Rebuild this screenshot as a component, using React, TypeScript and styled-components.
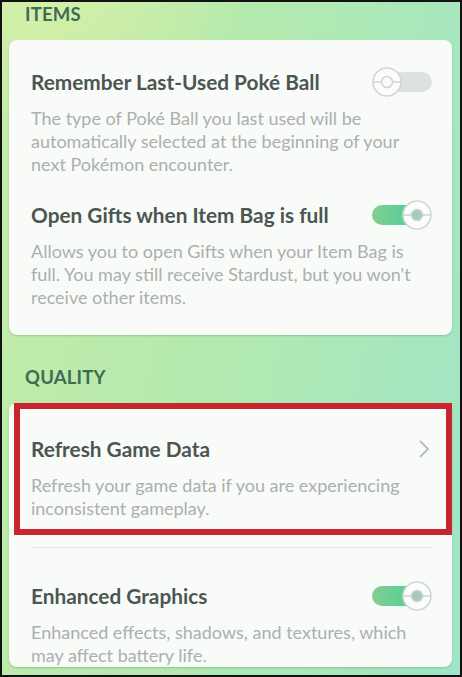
import React from "react"
import styled, { createGlobalStyle } from "styled-components"

const GlobalStyle = createGlobalStyle`
	html, body {
		margin: 0;
		padding: 0;
		height: 100%;
	}
	body {
		font-family: Lato, "Noto Sans", "Liberation Sans", sans-serif;
		-webkit-font-smoothing: antialiased;
	}
	#root {
		height: 100%;
	}
`

interface SettingProps {
	title: string
	description: string
	control?: React.ReactNode
}

function Setting(props: SettingProps) {
	return (
		<Row>
			<TitleLine>
				<Title>{props.title}</Title>
				<Control>{props.control}</Control>
			</TitleLine>
			<Description>{props.description}</Description>
		</Row>
	)
}

function PokeBall(props: { on?: boolean }) {
	return (
		<svg width="30" height="30" viewBox="0 0 30 30">
			<circle cx="15" cy="15" r="14" fill="#fbfcfb" stroke="#d2d7d5" strokeWidth="1.6" />
			<line x1="1" y1="15" x2="29" y2="15" stroke="#d2d7d5" strokeWidth="1.6" />
			<circle
				cx="15"
				cy="15"
				r="5.5"
				fill={props.on ? "#a9c8bc" : "#fbfcfb"}
				stroke={props.on ? "#c5d8d0" : "#d2d7d5"}
				strokeWidth="1.6"
			/>
		</svg>
	)
}

function Toggle(props: { on?: boolean }) {
	return (
		<Switch>
			<Track $on={props.on} />
			<Knob $on={props.on}>
				<PokeBall on={props.on} />
			</Knob>
		</Switch>
	)
}

function Chevron() {
	return (
		<svg width="12" height="20" viewBox="0 0 12 20">
			<path d="M2.5 2.5 L10 10 L2.5 17.5" fill="none" stroke="#b9bebc" strokeWidth="1.8" strokeLinecap="round" strokeLinejoin="round" />
		</svg>
	)
}

export default function App() {
	return (
		<>
			<GlobalStyle />
			<Screen>
				<Section>
					<Heading>ITEMS</Heading>
					<Card $padded>
						<Setting
							title="Remember Last-Used Poké Ball"
							description="The type of Poké Ball you last used will be automatically selected at the beginning of your next Pokémon encounter."
							control={<Toggle />}
						/>
						<Setting
							title="Open Gifts when Item Bag is full"
							description="Allows you to open Gifts when your Item Bag is full. You may still receive Stardust, but you won't receive other items."
							control={<Toggle on />}
						/>
					</Card>
				</Section>
				<Section>
					<Heading>QUALITY</Heading>
					<Card>
						<Highlight>
							<Setting
								title="Refresh Game Data"
								description="Refresh your game data if you are experiencing inconsistent gameplay."
								control={
									<ChevronSlot>
										<Chevron />
									</ChevronSlot>
								}
							/>
						</Highlight>
						<Divider />
						<Plain>
							<Setting
								title="Enhanced Graphics"
								description="Enhanced effects, shadows, and textures, which may affect battery life."
								control={<Toggle on />}
							/>
						</Plain>
					</Card>
				</Section>
			</Screen>
		</>
	)
}

const Screen = styled.div`
	box-sizing: border-box;
	height: 100vh;
	overflow: hidden;
	border: 2px solid #121212;
	padding: 0 8px 0 7px;
	display: flex;
	flex-direction: column;
	gap: 30px;
	background:
		radial-gradient(ellipse 60% 30% at 10% 0%, rgba(214, 240, 168, 0.9), rgba(214, 240, 168, 0) 70%),
		linear-gradient(100deg, #c4eca8 0%, #b4eaae 45%, #a0e5c6 100%);
`

const Section = styled.section`
	display: flex;
	flex-direction: column;
`

const Heading = styled.h2`
	margin: 0 0 14px;
	padding-left: 16px;
	font-size: 18.5px;
	line-height: 24px;
	font-weight: 700;
	letter-spacing: 0.2px;
	color: #3f6c56;
`

const Card = styled.div<{ $padded?: boolean }>`
	background: #f9fbf9;
	border-radius: 8px;
	box-shadow: 0 1px 2px rgba(40, 90, 60, 0.25);
	display: flex;
	flex-direction: column;
	gap: 27px;
	${props => (props.$padded ? "padding: 30px 20px 26px 22px;" : "gap: 0;")}
`

const Highlight = styled.div`
	margin-left: 5px;
	border: 6px solid #c8262e;
	padding: 28px 14px 9px 11px;
`

const Plain = styled.div`
	padding: 36px 20px 0 22px;
`

const Divider = styled.div`
	height: 1px;
	margin: 12px 20px 0 22px;
	background: #e2e6e4;
`

const Row = styled.div`
	display: flex;
	flex-direction: column;
	gap: 13px;
`

const TitleLine = styled.div`
	display: flex;
	align-items: center;
	justify-content: space-between;
	height: 24px;
`

const Title = styled.div`
	font-size: 20.8px;
	line-height: 24px;
	font-weight: 700;
	color: #4b5652;
	white-space: nowrap;
`

const Control = styled.div`
	width: 60px;
	display: flex;
	justify-content: flex-end;
`

const Description = styled.div`
	font-size: 18px;
	line-height: 23px;
	color: #aab0ae;
	padding-right: 20px;
`

const Switch = styled.div`
	position: relative;
	width: 60px;
	height: 30px;
`

const Track = styled.div<{ $on?: boolean }>`
	position: absolute;
	top: 5px;
	height: 20px;
	border-radius: 10px;
	${props =>
		props.$on
			? "left: 0; right: 14px; background: linear-gradient(90deg, #86cd92, #45d197);"
			: "left: 16px; right: 0; background: #dde1e0;"}
`

const Knob = styled.div<{ $on?: boolean }>`
	position: absolute;
	top: 0;
	width: 30px;
	height: 30px;
	${props => (props.$on ? "right: 0;" : "left: 0;")}
	svg {
		display: block;
	}
`

const ChevronSlot = styled.div`
	display: flex;
	align-items: center;
	padding-right: 2px;
`
